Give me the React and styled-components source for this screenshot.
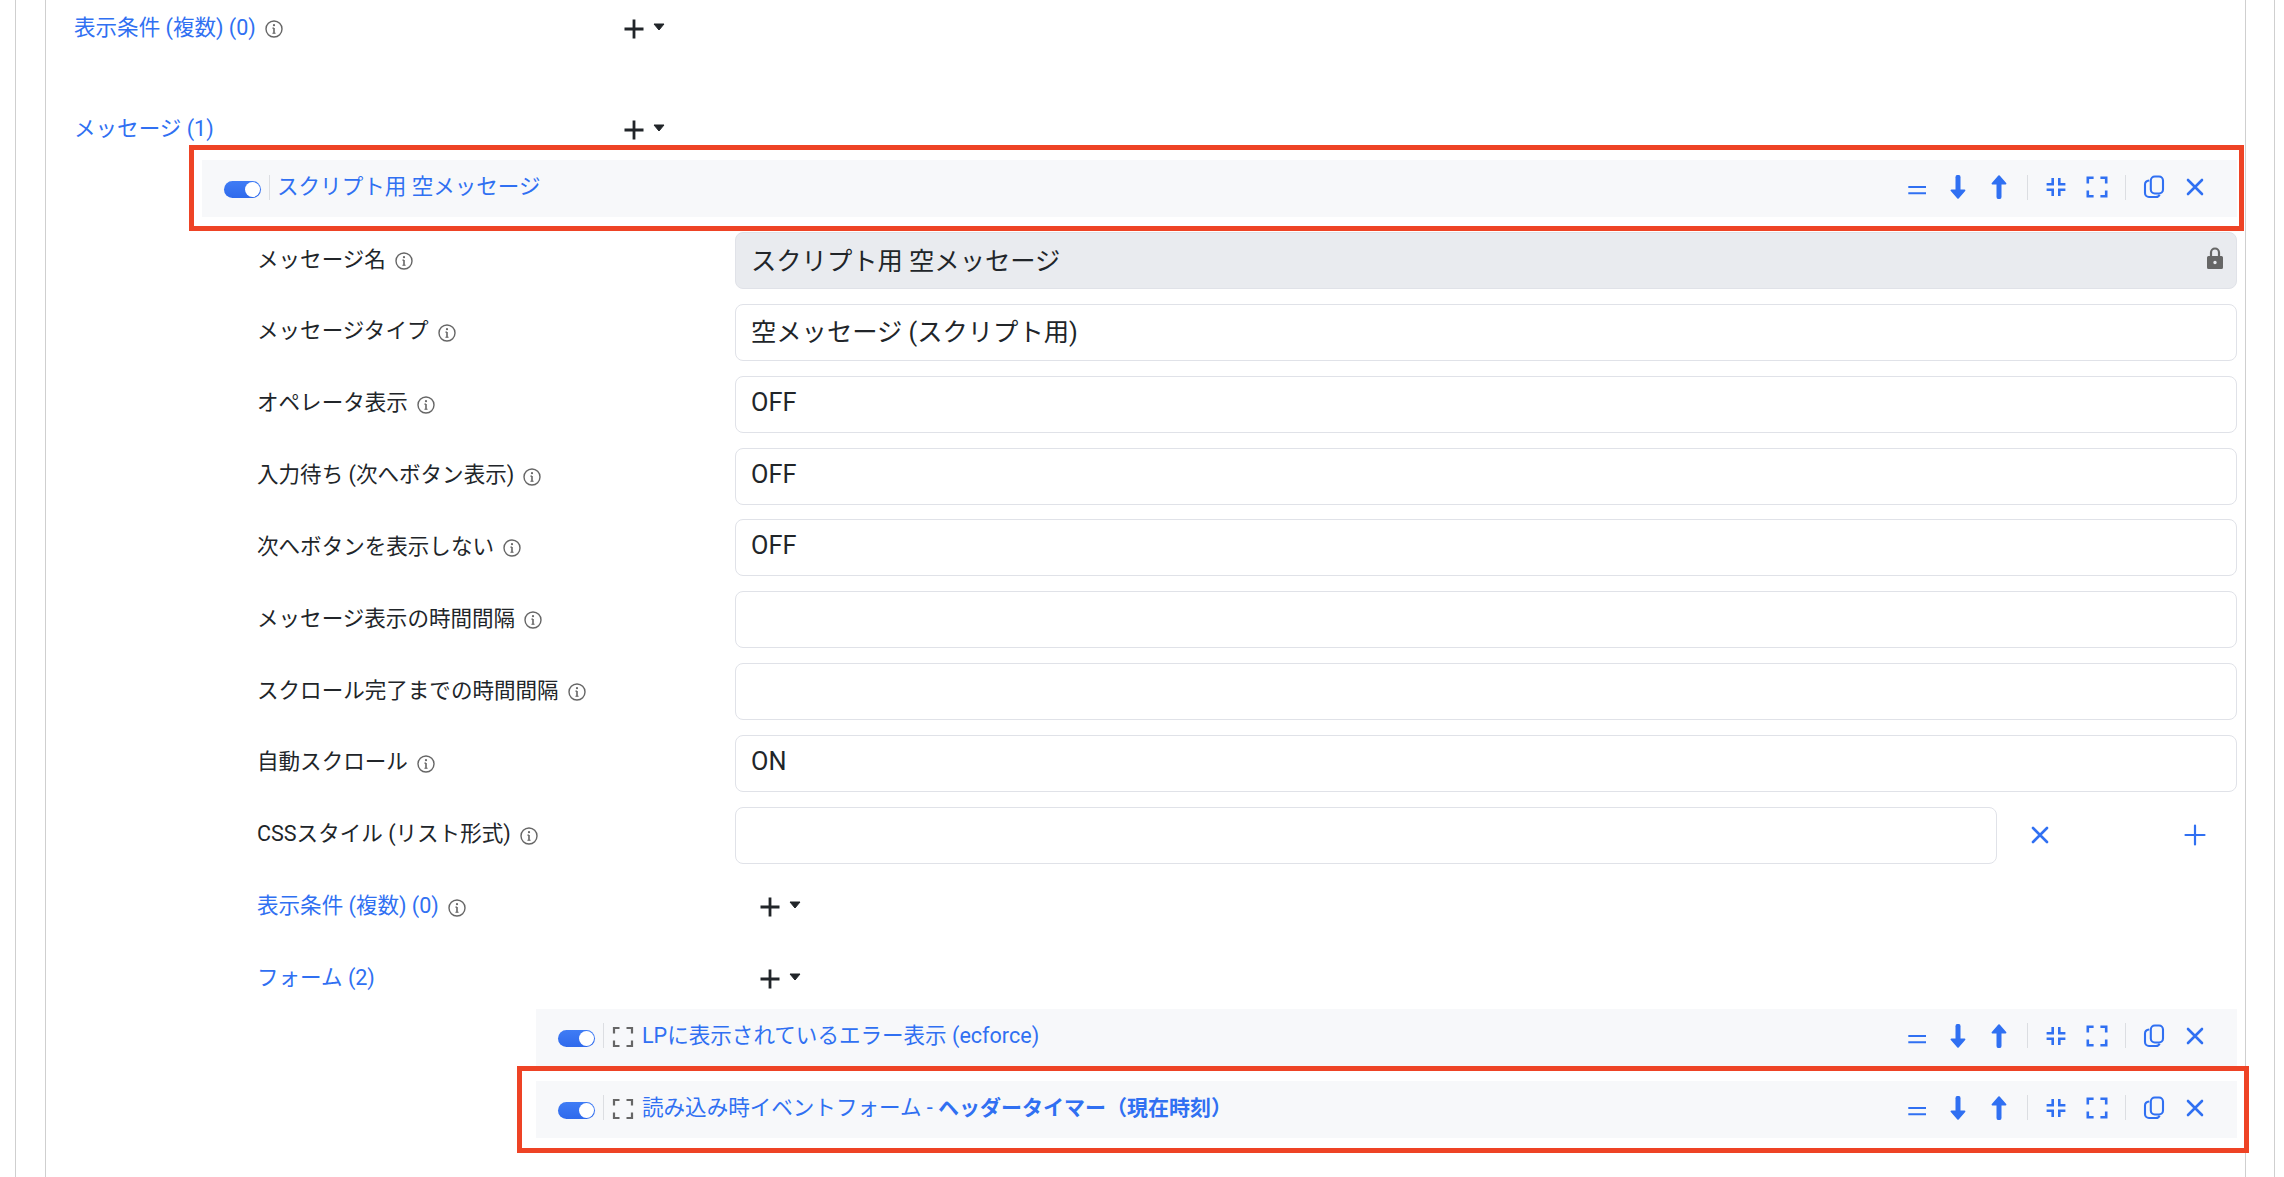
import React from "react"
import styled, { createGlobalStyle } from "styled-components"

const blue = "#3070f2"
const textColor = "#212529"
const grey = "#666666"

const GlobalStyle = createGlobalStyle`
  html, body {
    margin: 0;
    padding: 0;
    background: #fff;
  }
  body {
    font-family: Roboto, "Noto Sans CJK JP", sans-serif;
    color: ${textColor};
    overflow: hidden;
  }
`

const Page = styled.div`
  height: 1177px;
  overflow: hidden;
  padding-left: 15px;
`

const OuterFrame = styled.div`
  box-sizing: border-box;
  width: 2260px;
  height: 100%;
  padding: 0 28px 0 29px;
  border-left: 1px solid #cfcfcf;
  border-right: 1px solid #cfcfcf;
`

const InnerFrame = styled.div`
  box-sizing: border-box;
  height: 100%;
  padding: 0 8px 0 28px;
  border-left: 1px solid #cfcfcf;
  border-right: 1px solid #cfcfcf;
`

const MessageBody = styled.div`
  margin-left: 128px;
`

const Fields = styled.div`
  padding-left: 55px;
`

const Row = styled.div`
  display: flex;
  align-items: center;
  height: 57px;
  margin-bottom: ${(props) => props.$gap}px;
`

const LabelCell = styled.div`
  display: flex;
  align-items: center;
  flex: none;
  width: ${(props) => props.$width}px;
  margin-top: -2px;
  font-size: 21.55px;
  line-height: 30px;
  color: ${(props) => (props.$link ? blue : textColor)};
`

const InfoIcon = styled.svg`
  flex: none;
  width: 18px;
  height: 18px;
  margin-left: 9px;
  margin-top: 3px;
  color: ${grey};
`

const AddButton = styled.div`
  display: flex;
  align-items: center;
  padding-left: ${(props) => props.$inset}px;
  color: ${textColor};
  svg {
    display: block;
  }
`

const Caret = styled.svg`
  margin-left: 9px;
  margin-bottom: 4px;
`

const Field = styled.div`
  flex: 1;
  position: relative;
  box-sizing: border-box;
  display: flex;
  align-items: center;
  height: 57px;
  padding: 0 15px 4px;
  font-size: 25.3px;
  border: 1.5px solid #e0e2e8;
  border-radius: 8px;
  background: ${(props) => (props.$locked ? "#e9ebef" : "#fff")};
`

const LockIcon = styled.svg`
  position: absolute;
  right: 12px;
  top: 14px;
  color: ${grey};
`

const ListActions = styled.div`
  flex: none;
  box-sizing: border-box;
  display: flex;
  justify-content: space-between;
  align-items: center;
  width: 240px;
  padding: 0 30px 0 31px;
  color: ${blue};
`

const Item = styled.div`
  position: relative;
  margin-left: ${(props) => props.$indent || 0}px;
  margin-bottom: 15px;
`

const Highlight = styled.div`
  position: absolute;
  top: -15px;
  bottom: ${(props) => props.$bottom}px;
  left: ${(props) => props.$left}px;
  right: ${(props) => props.$right}px;
  border: 5px solid #ee4325;
  pointer-events: none;
`

const Bar = styled.div`
  box-sizing: border-box;
  display: flex;
  align-items: center;
  height: 57px;
  padding: 0 21.5px 0 22px;
  background: #f7f8fa;
`

const Toggle = styled.span`
  flex: none;
  position: relative;
  width: 37px;
  height: 17px;
  margin-top: 2px;
  border-radius: 9px;
  background: linear-gradient(180deg, #3f7cf5, #2f6aec);
  &::after {
    content: "";
    position: absolute;
    top: 1px;
    right: 1px;
    width: 15px;
    height: 15px;
    border-radius: 50%;
    background: #fff;
  }
`

const BarDivider = styled.span`
  flex: none;
  width: 1px;
  height: 25px;
  margin: -3px 7px 0 8px;
  background: #dcdee2;
`

const ExpandGrey = styled.svg`
  flex: none;
  width: 24px;
  height: 24px;
  margin: 0 7px 0 0;
  color: ${grey};
`

const BarTitle = styled.div`
  flex: 1;
  margin-top: ${(props) => (props.$nested ? -3 : -4)}px;
  font-size: 21.55px;
  line-height: 30px;
  color: ${blue};
  white-space: nowrap;
  b {
    font-size: 21px;
    font-weight: 700;
  }
`

const Tools = styled.div`
  display: flex;
  align-items: center;
  flex: none;
  margin-top: -3px;
  color: ${blue};
`

const ToolSlot = styled.span`
  display: flex;
  justify-content: center;
  width: 41px;
  svg {
    display: block;
  }
`

const ToolDivider = styled.span`
  width: 1px;
  height: 25px;
  margin: 0 7.5px;
  background: #dcdee2;
`

function Svg({ children, size = 24 }) {
  return (
    <svg width={size} height={size} viewBox="0 0 24 24" fill="none" stroke="currentColor" strokeWidth="2.6">
      {children}
    </svg>
  )
}

function Info() {
  return (
    <InfoIcon viewBox="0 0 18 18" fill="none" stroke="currentColor">
      <circle cx="9" cy="9" r="8" strokeWidth="1.4" />
      <path d="M9 8v5.2" strokeWidth="1.6" />
      <path d="M7.4 8.1H9M7.4 13.2h3.2" strokeWidth="1.1" />
      <circle cx="9" cy="5.2" r="1.1" fill="currentColor" stroke="none" />
    </InfoIcon>
  )
}

function PlusCaret({ inset }) {
  return (
    <AddButton $inset={inset}>
      <svg width="20" height="20" viewBox="0 0 20 20" stroke="currentColor" strokeWidth="2.8">
        <path d="M10 0.5v19M0.5 10h19" />
      </svg>
      <Caret width="12" height="8" viewBox="0 0 12 8" fill="currentColor">
        <path d="M1 1h10L6 7z" stroke="currentColor" strokeLinejoin="round" />
      </Caret>
    </AddButton>
  )
}

function BarTools() {
  return (
    <Tools>
      <ToolSlot>
        <Svg>
          <path d="M3.3 12h17.7M3.3 18.2h17.7" strokeWidth="2" />
        </Svg>
      </ToolSlot>
      <ToolSlot>
        <Svg>
          <path d="M12 2.3v14" strokeWidth="5" strokeLinecap="round" />
          <path d="M5.5 15.5h13L12 22.8z" fill="currentColor" strokeWidth="1.8" strokeLinejoin="round" />
        </Svg>
      </ToolSlot>
      <ToolSlot>
        <Svg>
          <path d="M12 21.7v-14" strokeWidth="5" strokeLinecap="round" />
          <path d="M5.5 8.5h13L12 1.2z" fill="currentColor" strokeWidth="1.8" strokeLinejoin="round" />
        </Svg>
      </ToolSlot>
      <ToolDivider />
      <ToolSlot>
        <Svg>
          <path d="M8.7 3v6.3H2.6M15.3 3v6.3h6.1M8.7 21v-6.3H2.6M15.3 21v-6.3h6.1" />
        </Svg>
      </ToolSlot>
      <ToolSlot>
        <Svg>
          <path d="M2.8 8.6V2.8h5.8M21.2 8.6V2.8h-5.8M2.8 15.4v5.8h5.8M21.2 15.4v5.8h-5.8" />
        </Svg>
      </ToolSlot>
      <ToolDivider />
      <ToolSlot>
        <Svg>
          <rect x="8.8" y="1.5" width="12.2" height="17" rx="4" strokeWidth="2.1" />
          <path d="M7.3 5.5C4.6 5.8 3 7 3 9.5V18a4 4 0 0 0 4 4h7c1.8 0 3-.8 3.6-2.4" strokeWidth="2.1" />
        </Svg>
      </ToolSlot>
      <ToolSlot>
        <Svg>
          <path d="M5 5l14 14M19 5L5 19" strokeLinecap="round" />
        </Svg>
      </ToolSlot>
    </Tools>
  )
}

function ItemBar({ title, expandable }) {
  return (
    <Bar>
      <Toggle />
      <BarDivider />
      {expandable && (
        <ExpandGrey viewBox="0 0 24 24" fill="none" stroke="currentColor" strokeWidth="2.2">
          <path d="M3 8.5V3h5.5M21 8.5V3h-5.500M3 15.5V21h5.5M21 15.5V21h-5.5" />
        </ExpandGrey>
      )}
      <BarTitle $nested={expandable}>{title}</BarTitle>
      <BarTools />
    </Bar>
  )
}

const fields = [
  { label: "メッセージ名", value: "スクリプト用 空メッセージ", locked: true },
  { label: "メッセージタイプ", value: "空メッセージ (スクリプト用)" },
  { label: "オペレータ表示", value: "OFF" },
  { label: "入力待ち (次へボタン表示)", value: "OFF" },
  { label: "次へボタンを表示しない", value: "OFF" },
  { label: "メッセージ表示の時間間隔", value: "" },
  { label: "スクロール完了までの時間間隔", value: "" },
  { label: "自動スクロール", value: "ON" },
]

export default function App() {
  return (
    <Page>
      <GlobalStyle />
      <OuterFrame>
        <InnerFrame>
          <Row $gap={44.5}>
            <LabelCell $width={526} $link>
              表示条件 (複数) (0)
              <Info />
            </LabelCell>
            <PlusCaret inset={24} />
          </Row>
          <Row $gap={1.5}>
            <LabelCell $width={526} $link>
              メッセージ (1)
            </LabelCell>
            <PlusCaret inset={24} />
          </Row>
          <MessageBody>
            <Item>
              <ItemBar title="スクリプト用 空メッセージ" />
              <Highlight $left={-13} $right={-7} $bottom={-14} />
            </Item>
            <Fields>
              {fields.map((field) => (
                <Row key={field.label} $gap={14.85}>
                  <LabelCell $width={478}>
                    {field.label}
                    <Info />
                  </LabelCell>
                  <Field $locked={field.locked}>
                    {field.value}
                    {field.locked && (
                      <LockIcon width="18" height="24" viewBox="0 0 18 24" fill="currentColor">
                        <path d="M5 9V5.5a4 4 0 0 1 8 0V9" fill="none" stroke="currentColor" strokeWidth="2.2" />
                        <path
                          fillRule="evenodd"
                          d="M2.5 9h13A1.5 1.5 0 0 1 17 10.5v10a1.5 1.5 0 0 1-1.5 1.5h-13A1.5 1.5 0 0 1 1 20.5v-10A1.5 1.5 0 0 1 2.5 9zM9 13.800a1.7 1.7 0 1 0 0 3.4 1.7 1.7 0 0 0 0-3.4z"
                        />
                      </LockIcon>
                    )}
                  </Field>
                </Row>
              ))}
              <Row $gap={14.85}>
                <LabelCell $width={478}>
                  CSSスタイル (リスト形式)
                  <Info />
                </LabelCell>
                <Field />
                <ListActions>
                  <Svg>
                    <path d="M5 5l14 14M19 5L5 19" strokeLinecap="round" />
                  </Svg>
                  <Svg>
                    <path d="M12 2.5v19M2.5 12h19" strokeWidth="2.2" strokeLinecap="round" />
                  </Svg>
                </ListActions>
              </Row>
              <Row $gap={14.85}>
                <LabelCell $width={478} $link>
                  表示条件 (複数) (0)
                  <Info />
                </LabelCell>
                <PlusCaret inset={25} />
              </Row>
              <Row $gap={1.5}>
                <LabelCell $width={478} $link>
                  フォーム (2)
                </LabelCell>
                <PlusCaret inset={25} />
              </Row>
            </Fields>
            <Item $indent={334}>
              <ItemBar title="LPに表示されているエラー表示 (ecforce)" expandable />
            </Item>
            <Item $indent={334}>
              <ItemBar
                expandable
                title={
                  <>
                    読み込み時イベントフォーム - <b>ヘッダータイマー（現在時刻）</b>
                  </>
                }
              />
              <Highlight $left={-19} $right={-12} $bottom={-15} />
            </Item>
          </MessageBody>
        </InnerFrame>
      </OuterFrame>
    </Page>
  )
}
